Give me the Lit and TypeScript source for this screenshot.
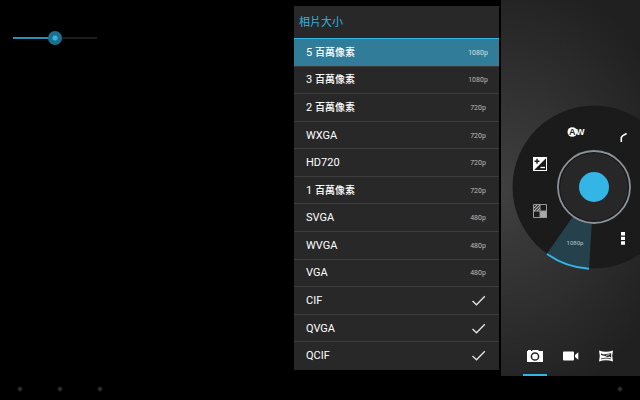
import { LitElement, html, svg, css } from "lit";
import { customElement, state } from "lit/decorators.js";
import { classMap } from "lit/directives/class-map.js";

interface SizeOption {
  name: string;
  unit?: string;
  video?: string;
}

const SIZES: SizeOption[] = [
  { name: "5", unit: "百萬像素", video: "1080p" },
  { name: "3", unit: "百萬像素", video: "1080p" },
  { name: "2", unit: "百萬像素", video: "720p" },
  { name: "WXGA", video: "720p" },
  { name: "HD720", video: "720p" },
  { name: "1", unit: "百萬像素", video: "720p" },
  { name: "SVGA", video: "480p" },
  { name: "WVGA", video: "480p" },
  { name: "VGA", video: "480p" },
  { name: "CIF" },
  { name: "QVGA" },
  { name: "QCIF" },
];

@customElement("zoom-slider")
export class ZoomSlider extends LitElement {
  static styles = css`
    :host {
      display: block;
    }
    .range {
      appearance: none;
      display: block;
      width: 84px;
      height: 14px;
      margin: 0;
      background: linear-gradient(90deg, #2a8fb5 50%, #1c1c1c 50%) center / 100% 2px no-repeat;
    }
    .range::-webkit-slider-thumb {
      appearance: none;
      width: 14px;
      height: 14px;
      border-radius: 50%;
      background: radial-gradient(circle, #33b5e5 2px, #1e6f8f 3px);
    }
  `;

  render() {
    return html`<input class="range" type="range" min="0" max="100" value="50" aria-label="縮放" />`;
  }
}

@customElement("size-menu")
export class SizeMenu extends LitElement {
  @state() private selected = 0;

  static styles = css`
    :host {
      display: flex;
      flex-direction: column;
      background: #282828;
      color: #fff;
    }
    .title {
      flex: none;
      box-sizing: border-box;
      margin: 0;
      padding: 2px 5px 0;
      height: 33px;
      line-height: 30px;
      font-size: 11px;
      font-weight: 400;
      color: #33b5e5;
      border-bottom: 1px solid #33b5e5;
    }
    .list {
      flex: 1;
      display: flex;
      flex-direction: column;
      margin: 0;
      padding: 0;
      list-style: none;
    }
    .item {
      flex: 1;
      display: flex;
      border-bottom: 1px solid #3c3c3c;
    }
    .item:last-child {
      border-bottom-color: transparent;
    }
    .row {
      flex: 1;
      display: flex;
      align-items: center;
      justify-content: space-between;
      padding: 1px 11px 0 12px;
      border: none;
      background: none;
      color: inherit;
      font: inherit;
      font-size: 11px;
      line-height: 16px;
    }
    .unit {
      font-size: 10px;
      font-weight: 500;
    }
    .selected {
      background: #317d99;
    }
    .video {
      width: 20px;
      text-align: center;
      font-size: 7px;
      color: #bbb;
    }
    .selected .video {
      color: #cfe3ea;
    }
    .check {
      width: 14px;
      height: 12px;
      margin-right: 2px;
      fill: none;
      stroke: #e4e4e4;
      stroke-width: 1.3;
    }
  `;

  render() {
    return html`
      <h2 class="title">相片大小</h2>
      <ul class="list">
        ${SIZES.map(
          (size, i) => html`<li class="item">
            <button
              class=${classMap({ row: true, selected: i === this.selected })}
              @click=${() => (this.selected = i)}
            >
              <span>${size.name}${size.unit ? html` <span class="unit">${size.unit}</span>` : ""}</span>
              ${size.video
                ? html`<span class="video">${size.video}</span>`
                : html`<svg class="check" viewBox="0 0 14 12"><path d="M.5 6 4.5 9.8 12.8 1.2" /></svg>`}
            </button>
          </li>`
        )}
      </ul>
    `;
  }
}

@customElement("mode-dial")
export class ModeDial extends LitElement {
  static styles = css`
    :host {
      display: block;
      position: relative;
      width: 164px;
      height: 164px;
    }
    .face {
      display: block;
      width: 164px;
      height: 164px;
      overflow: visible;
    }
    .tool {
      position: absolute;
      width: 20px;
      height: 20px;
      padding: 0;
      border: none;
      background: none;
      color: #fff;
    }
    .tool svg {
      display: block;
      width: 20px;
      height: 20px;
    }
    .white-balance { left: 53px; top: 17px; }
    .flash { left: 101px; top: 22px; }
    .exposure { left: 18px; top: 49px; }
    .scene { left: 18px; top: 96px; }
    .more { left: 101px; top: 123px; }
    .size {
      left: 53px;
      top: 128px;
      font: 400 6px/20px Roboto, sans-serif;
      color: #b4c4ca;
    }
    .glyph {
      font: 700 9px "Liberation Sans", sans-serif;
    }
    .shutter {
      position: absolute;
      left: 67px;
      top: 67px;
      width: 30px;
      height: 30px;
      padding: 0;
      border: none;
      border-radius: 50%;
      background: #33b5e5;
    }
  `;

  private face() {
    return svg`
      <defs>
        <pattern id="weave" width="3" height="3" patternUnits="userSpaceOnUse">
          <rect width="3" height="3" fill="#1c1c1c" />
          <path d="M0 0 3 3" stroke="#181818" stroke-width="1" />
        </pattern>
      </defs>
      <circle cx="82" cy="82" r="81.5" fill="url(#weave)" />
      <path d="M60.5 112.3 34.5 149.2A82.5 82.5 0 0 0 77 164.4L79.8 118Z" fill="#24414c" />
      <path d="M35 149A82 82 0 0 0 77 163.8" fill="none" stroke="#33b5e5" stroke-width="2" />
      <circle cx="82" cy="82" r="36" fill="#151515" />
      <circle cx="82" cy="82" r="34" fill="#272727" />
      <circle cx="82" cy="82" r="36" fill="none" stroke="#8b9298" stroke-width="1.8" />
    `;
  }

  render() {
    return html`
      <svg class="face" viewBox="0 0 164 164">${this.face()}</svg>
      <button class="tool white-balance" aria-label="白平衡">
        <svg viewBox="0 0 20 20">
          <circle cx="7.3" cy="10" r="4.8" fill="#fff" />
          <text class="glyph" x="7.3" y="13" text-anchor="middle" fill="#1c1c1c">A</text>
          <text class="glyph" x="11" y="13" fill="#fff">W</text>
        </svg>
      </button>
      <button class="tool flash" aria-label="閃光燈">
        <svg viewBox="0 0 20 20">
          <path d="M8.3 15V10.5L9.5 8.8 13.6 6.5" fill="none" stroke="#fff" stroke-width="1.6" />
        </svg>
      </button>
      <button class="tool exposure" aria-label="曝光">
        <svg viewBox="0 0 20 20">
          <path d="M3 3H17V17H3Z" fill="#fff" />
          <path d="M16 4.2V16H4.2Z" fill="#1c1c1c" />
          <path d="M4.5 7.2H9.5M7 4.7V9.7" stroke="#1c1c1c" stroke-width="1.4" />
          <path d="M10.5 13.5H15" stroke="#fff" stroke-width="1.3" />
        </svg>
      </button>
      <button class="tool scene" aria-label="場景模式">
        <svg viewBox="0 0 20 20">
          <path d="M10 10H17V17H10Z" fill="#aaa" />
          <path d="M3.5 3.5H16.5V16.5H3.5ZM10 3.5V16.5M3.5 10H16.5" fill="none" stroke="#999" />
          <path d="M4 7 7 4M4 10 10 4M7 10 10 7" stroke="#aaa" stroke-width="1.1" />
        </svg>
      </button>
      <button class="tool more" aria-label="更多">
        <svg viewBox="0 0 20 20">
          <path d="M8 4h4v3.5H8ZM8 8.7h4V12H8ZM8 13.3h4v3.4H8Z" fill="#fff" />
        </svg>
      </button>
      <button class="tool size">1080p</button>
      <button class="shutter" aria-label="快門"></button>
    `;
  }
}

@customElement("app-root")
export class AppRoot extends LitElement {
  static styles = css`
    :host {
      display: flex;
      flex-direction: column;
      min-height: 100vh;
      background: #000;
      font-family: Roboto, "Noto Sans CJK TC", sans-serif;
      overflow: hidden;
    }
    .stage {
      flex: 1;
      display: flex;
      gap: 2px;
    }
    .preview {
      flex: 1;
      padding: 31px 13px;
    }
    .menu {
      width: 205px;
      margin: 6px 0;
    }
    .controls {
      display: grid;
      grid-template-rows: 1fr auto 1fr;
      width: 139px;
      overflow: hidden;
      background: radial-gradient(ellipse 180px 220px at 0 190px, #404040, #202020);
    }
    .dial {
      grid-row: 2;
      margin: 0 0 2px 11px;
    }
    .modes {
      grid-row: 3;
      align-self: end;
      display: flex;
      gap: 12px;
      padding-left: 22px;
    }
    .mode {
      width: 24px;
      height: 30px;
      padding: 0;
      border: none;
      border-bottom: 2px solid transparent;
      background: none;
    }
    .mode svg {
      display: block;
      width: 24px;
      height: 18px;
      margin-bottom: 8px;
    }
    .current {
      border-bottom-color: #33b5e5;
    }
    .system {
      display: flex;
      height: 24px;
      padding-top: 2px;
      box-sizing: border-box;
    }
    .key {
      width: 40px;
      padding: 0;
      border: none;
      background: radial-gradient(circle, #303030 1px, #1a1a1a 2px, #000 3px);
    }
    .menu-key {
      margin-left: auto;
    }
  `;

  render() {
    return html`
      <main class="stage">
        <section class="preview"><zoom-slider></zoom-slider></section>
        <size-menu class="menu"></size-menu>
        <section class="controls">
          <mode-dial class="dial"></mode-dial>
          <nav class="modes">
            <button class="mode current" aria-label="相機">
              <svg viewBox="0 0 24 18">
                <path d="M4 4H5V3H8V4H9L10 3H15L16 4H20V15H4Z" fill="#fff" />
                <circle cx="12" cy="9.5" r="3.6" fill="#fff" stroke="#252525" stroke-width="1.5" />
              </svg>
            </button>
            <button class="mode" aria-label="錄影">
              <svg viewBox="0 0 24 18">
                <path d="M5 4.5H14Q15 4.5 15 5.5V12.5Q15 13.5 14 13.5H5Q4 13.5 4 12.5V5.5Q4 4.5 5 4.5ZM16 8 19.3 5.3V12.7L16 10Z" fill="#fff" />
              </svg>
            </button>
            <button class="mode" aria-label="全景">
              <svg viewBox="0 0 24 18">
                <path d="M4 3.5Q11 6 18 3.5L17.2 9 18 14.5Q11 12 4 14.5L4.8 9Z" fill="#fff" />
                <path d="M6 6.5 9 7.5 11 7 16.2 6.3V10.5L14 9.5 13 10.3 10 9 6 8Z" fill="#252525" />
                <path d="M11 8.3 14.5 7.6" stroke="#fff" stroke-width=".8" />
                <path d="M6 11.8Q11 10.4 16 11.8" fill="none" stroke="#252525" stroke-width=".8" />
              </svg>
            </button>
          </nav>
        </section>
      </main>
      <footer class="system">
        <button class="key" aria-label="返回"></button>
        <button class="key" aria-label="主畫面"></button>
        <button class="key" aria-label="最近"></button>
        <button class="key menu-key" aria-label="選單"></button>
      </footer>
    `;
  }
}
